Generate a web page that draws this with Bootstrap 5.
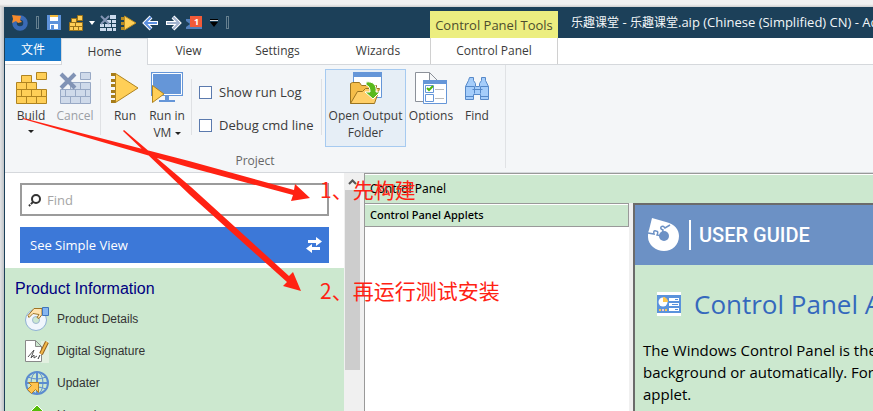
<!DOCTYPE html>
<html lang="en">
<head>
<meta charset="utf-8">
<meta name="viewport" content="width=device-width, initial-scale=1">
<title>乐趣课堂 - 乐趣课堂.aip</title>
<link href="https://cdn.jsdelivr.net/npm/bootstrap@5.3.0/dist/css/bootstrap.min.css" rel="stylesheet">
<style>
:root { --ink:#1c4059; --ribbon:#f4f6f8; --rule:#d5d8dc; --mint:#cce8cf; --ui:"Open Sans","Noto Sans CJK SC",sans-serif; }
body { background:#e9e9eb; font-family:var(--ui); font-size:12px; line-height:16px; color:#3b3b3b; }
button, input { font:inherit; color:inherit; }
.desk-top { height:7px; background:linear-gradient(#f1f1f1 60%,#cfcfcf); }
.desk-side { width:4px; background:linear-gradient(90deg,#e2e3e5,#bfc3c7); }
.app-window { border-left:1px solid var(--ink); background:#fff; min-width:0; }
.title-strip { background:var(--ink); height:31px; color:#f2f6f8; }
.quick-bar { width:425px; padding-left:6px; }
.quick-bar button, .bare { background:none; border:0; padding:0; line-height:0; }
.grip { width:3px; height:13px; border:1px solid #66808f; }
.context-head { width:128px; height:27px; background:#ecee80; color:#4c4d2d; font-size:13px; }
.win-title { padding-left:13px; font-size:13px; }
.win-title span { font-size:12px; }
.tab-strip { height:27px; border-bottom:1px solid var(--rule); }
.tab-strip a { color:#3b3b3b; text-decoration:none; height:26px; font-size:12px; }
.tab-strip .t-file { width:56px; height:23px; background:#1979ca; color:#fff; }
.tab-strip .t-home { width:87px; height:27px; background:var(--ribbon); border:1px solid var(--rule); border-bottom:0; }
.t-view { width:81px; } .t-set { width:97px; } .t-wiz { width:104px; }
.t-ctl { width:128px; border:solid #d0d0d0; border-width:0 1px; }
.ribbon { background:var(--ribbon); height:108px; border-bottom:1px solid var(--rule); }
.ribbon-group { width:501px; padding:4px 4px 0; border-right:1px solid #e0e2e5; margin-bottom:4px; }
.tool { display:flex; flex-direction:column; align-items:center; background:none; border:1px solid transparent; height:78px; padding:2px 0 0; line-height:17px; width:44px; white-space:nowrap; }
.tool > svg { flex-shrink:0; margin-bottom:3px; }
.tool .caret { margin-top:6px; }
.tool span .caret { margin-top:0; }
.tool-off { color:#9b9fa5; }
.tool-run { width:42px; }
.tool-open { width:81px; background:#e6eef6; border-color:#a6caf0; margin-right:1px; }
.tool-opt { width:48px; }
.caret { display:inline-block; border:3px solid transparent; border-top-color:#222; border-bottom:0; vertical-align:middle; }
.split { width:1px; height:56px; background:#dfe1e4; margin:10px 3px 0; }
.checks { width:123px; padding:15px 0 0 4px; gap:17px; font-size:13px; }
.checks input { appearance:none; width:13px; height:13px; border:1px solid #5b7aae; background:#fff; margin:0 7px 0 0; }
.checks input:checked { background:#5b7aae; }
.group-name { color:#666; margin-top:6px; }
.side-pane { width:339px; }
.find-box { margin:10px 15px 11px; height:33px; border:2px solid #9b9b9b; padding-left:6px; }
.find-box input { border:0; outline:0; background:none; font-size:13px; margin-left:3px; min-width:0; }
.find-box input::placeholder { color:#a5a5a5; opacity:1; }
.simple-btn { margin:0 15px 5px; height:36px; background:#3c78d8; color:#fff; border:0; padding:0 7px 0 10px; font-size:13px; }
.info-list { background:var(--mint); font-family:"Liberation Sans",sans-serif; padding:10px 10px 0; }
.info-list h2 { font-size:16px; line-height:22px; color:#000080; margin:0 0 3px; }
.info-list a { height:32px; color:#333; text-decoration:none; gap:8px; padding-left:10px; }
.scroller { width:20px; background:#f0f0f0; padding-left:1px; }
.scroller .thumb { width:15px; height:180px; background:#cdcdcd; }
.scroller button { width:15px; height:17px; }
.main-pane { border:solid #999; border-width:1px 0 0 1px; min-width:0; font-family:"Noto Sans",sans-serif; color:#000; }
.main-head { background:var(--mint); height:29px; border-top:1px solid #fff; padding-left:5px; }
.applets { width:264px; }
.applets h2 { height:24px; font-size:11px; font-weight:500; line-height:16px; border:1px solid #999; border-left:0; background:var(--mint); box-shadow:inset 0 1px #fff; padding-left:5px; margin:0; }
.guide { border:solid #6b6b6b; border-width:2px 0 0 2px; background:var(--mint); margin-left:4px; min-width:0; }
.guide-wrap { background:#f0f0f0; min-width:0; }
.guide-head { background:#6c91c5; height:60px; padding-left:11px; color:#fff; font:500 20px/30px Roboto,sans-serif; }
.guide-head div { border-left:2px solid #fff; margin-left:9px; padding-left:8px; }
.guide h1 { font:26px/36px "Open Sans",sans-serif; color:#3568bd; margin:21px 0 17px 22px; gap:13px; white-space:nowrap; }
.guide p { font:15px/22px "Open Sans",sans-serif; white-space:nowrap; margin:0 0 0 8px; }
.notes { inset:0; pointer-events:none; color:#ff2213; }
.notes span { position:absolute; left:320px; font:21px/26px "Noto Sans CJK SC",sans-serif; white-space:nowrap; }
.note-a { top:176px; } .note-b { top:277px; }
</style>
<script src="https://cdn.jsdelivr.net/npm/bootstrap@5.3.0/dist/js/bootstrap.bundle.min.js"></script>
</head>
<body class="vh-100 overflow-hidden d-flex flex-column position-relative">
<svg width="0" height="0" class="position-absolute" aria-hidden="true">
  <symbol id="bricks" viewBox="0 0 32 32"><path d="M6.500 3.500h10v7h-10zM21.500 .500h10v7h-10zM1.500 10.500h10v7h-10zM11.500 10.500h10v7h-10zM1.500 17.500h5v7h-5zM6.500 17.500h10v7h-10zM16.500 17.500h10v7h-10zM26.500 17.500h5v7h-5zM1.500 24.500h10v7h-10zM11.500 24.500h10v7h-10zM21.500 24.500h10v7h-10z"/></symbol>
  <symbol id="cancel" viewBox="0 0 32 32"><path fill="#cfdaea" stroke="#98a9c5" d="M21.500 .500h10v7h-10zM11.500 10.500h10v7h-10zM21.500 10.500h10v7h-10zM1.500 17.500h5v7h-5zM6.500 17.500h10v7h-10zM16.500 17.500h10v7h-10zM26.500 17.500h5v7h-5zM1.500 24.500h10v7h-10zM11.500 24.500h10v7h-10zM21.500 24.500h10v7h-10z"/><path d="M2 2l14 14M16 2L2 16" stroke="#8193b5" stroke-width="4"/></symbol>
  <symbol id="run" viewBox="0 0 32 32"><path fill="#a67c1a" d="M2 1h5v3H2zM2 7h5v3H2zM2 12h5v3H2zM2 18h5v3H2zM2 23h5v3H2zM2 28h5v3H2z"/><path fill="#ffcf57" stroke="#b08420" d="M6.500 1.500v29L29 16z"/></symbol>
</svg>
<div class="desk-top flex-shrink-0"></div>
<div class="d-flex flex-fill overflow-hidden">
<div class="desk-side flex-shrink-0"></div>
<div class="app-window flex-fill d-flex flex-column">
  <header class="title-strip d-flex flex-shrink-0 align-items-end text-nowrap overflow-hidden">
    <div class="quick-bar d-flex h-100 align-items-center flex-shrink-0">
      <svg width="17" height="17" viewBox="0 0 17 17"><circle cx="9" cy="9" r="5.500" fill="none" stroke="#3a6ab5" stroke-width="4.500"/><path d="M1 1l9 1-1 4 2 2-4 1-2-2-4 2 1-4z" fill="#f58a2c"/></svg>
      <i class="grip ms-2 me-2"></i>
      <button aria-label="Save"><svg width="14" height="15"><path fill="#5e93dc" d="M0 0h14v15H0z"/><path fill="#fff" d="M3 0h8v6H3zM3 9h8v5H3z"/><path fill="#f3b93c" d="M3 0h8v2H3z"/><path fill="#5e93dc" d="M4 10h3v4H4z"/></svg></button>
      <button aria-label="Build" class="ms-2"><svg width="15" height="16" viewBox="0 0 15 16" fill="#ffcf57" stroke="#99721a"><path d="M2.500 3.500h5v4h-5zM8.500 .500h5v5h-5zM.500 7.500h6v4h-6zM6.500 7.500h7v4h-7zM.500 11.500h4v4h-4zM4.500 11.500h5v4h-5zM9.500 11.500h4v4h-4z"/></svg></button>
      <button aria-label="Build menu" class="ms-1"><svg width="8" height="6"><path d="M1 1h6L4 5z" fill="#fff"/></svg></button>
      <button aria-label="Cancel" class="ms-1"><svg width="16" height="16"><path fill="#cbd9ec" d="M10 0h6v4h-6zM7 5h4v3H7zM12 5h4v3h-4zM0 9h4v3H0zM5 9h6v3H5zM12 9h4v3h-4zM0 13h6v3H0zM7 13h5v3H7zM13 13h3v3h-3z"/><path d="M1 1l8 8M9 1L1 9" stroke="#8394b5" stroke-width="2"/></svg></button>
      <button aria-label="Run" class="ms-1"><svg width="18" height="16"><path fill="#b98b22" d="M1 2h3v3H1zM1 7h3v3H1zM1 12h3v3H1z"/><path fill="#ffcf57" stroke="#b98b22" d="M4.500 1v14L16 8z"/></svg></button>
      <button aria-label="Back" class="ms-1"><svg width="18" height="16"><path d="M9 2L3 8l6 6M4 8h12" fill="none" stroke="#fff" stroke-width="4"/><path d="M9 2L3 8l6 6M4 8h11" fill="none" stroke="#5b8fe0" stroke-width="2"/></svg></button>
      <button aria-label="Forward" class="ms-1"><svg width="18" height="16"><path d="M9 2l6 6-6 6M14 8H2" fill="none" stroke="#fff" stroke-width="4"/><path d="M9 2l6 6-6 6M14 8H3" fill="none" stroke="#a3b4cf" stroke-width="2"/></svg></button>
      <button aria-label="Notifications" class="ms-1"><svg width="16" height="16"><path fill="#5380bb" d="M0 4h16v10H0z"/><path fill="#1c4059" d="M0 6l4 3-4 3z"/><path fill="#f25a38" d="M4 1h12v11H4z"/><text x="8" y="10" font-size="9" font-weight="bold" fill="#fff">1</text></svg></button>
      <button aria-label="Customize" class="ms-2"><svg width="8" height="8"><path d="M0 0h8v1H0zM0 3h8L4 8z" fill="#000"/><path d="M0 1h8v1H0z" fill="#ddd"/></svg></button>
      <i class="grip ms-2"></i>
    </div>
    <div class="context-head d-flex align-items-center justify-content-center flex-shrink-0">Control Panel Tools</div>
    <div class="win-title align-self-center"><span>乐趣课堂</span> - <span>乐趣课堂</span>.aip (Chinese (Simplified) CN) - Advanced Installer</div>
  </header>
  <nav class="tab-strip d-flex flex-shrink-0 text-center">
    <a href="#" class="t-file d-flex align-items-center justify-content-center">文件</a>
    <a href="#" class="t-home d-flex align-items-center justify-content-center">Home</a>
    <a href="#" class="t-view d-flex align-items-center justify-content-center">View</a>
    <a href="#" class="t-set d-flex align-items-center justify-content-center">Settings</a>
    <a href="#" class="t-wiz d-flex align-items-center justify-content-center">Wizards</a>
    <a href="#" class="t-ctl d-flex align-items-center justify-content-center">Control Panel</a>
  </nav>
  <section class="ribbon d-flex flex-shrink-0">
    <div class="ribbon-group">
      <div class="d-flex">
        <button class="tool"><svg width="32" height="32" fill="#ffcf57" stroke="#b08420"><use href="#bricks"/></svg>Build<i class="caret"></i></button>
        <button class="tool tool-off"><svg width="32" height="32"><use href="#cancel"/></svg>Cancel</button>
        <i class="split"></i>
        <button class="tool tool-run"><svg width="32" height="32"><use href="#run"/></svg>Run</button>
        <button class="tool tool-run"><svg width="32" height="32"><path fill="#6596d8" d="M0 0h32v24H0zM14 24h4v4h-4zM8 28h16v2H8z"/><path fill="none" stroke="#fff" d="M1.500 1.500h29v21h-29z"/><path fill="#ffcf57" stroke="#b08420" d="M1.500 13.500v17L13 22z"/></svg><span>Run in<br>VM <i class="caret"></i></span></button>
        <i class="split"></i>
        <div class="checks d-flex flex-column">
          <label class="d-flex align-items-center" for="ck-log"><input type="checkbox" id="ck-log">Show run Log</label>
          <label class="d-flex align-items-center" for="ck-dbg"><input type="checkbox" id="ck-dbg">Debug cmd line</label>
        </div>
        <i class="split"></i>
        <button class="tool tool-open"><svg width="32" height="32"><path fill="#fff" stroke="#6596d8" d="M3.500 .500h28v25h-28z"/><path fill="#6596d8" d="M3 0h29v5H3z"/><path fill="#f5bd49" stroke="#9b7420" d="M.500 31.500v-20l2-1h7l2 3h15v7"/><path fill="#ffcf68" stroke="#9b7420" d="M.500 31.500l7-12h5l3-3h14l-5 15z"/><path fill="#59b91b" stroke="#fff" d="M16 10c7-1 11 3 10 10h4l-7 7-8-7h5c0-4-1-6-4-7z"/></svg><span>Open Output<br>Folder</span></button>
        <button class="tool tool-opt"><svg width="32" height="32"><path fill="#fff" stroke="#8c9199" d="M.500 .500h14l8 8v21H.500zM14.500 .500v8h8"/><path fill="#fff" stroke="#6596d8" d="M8.500 8.500h23v23h-23z"/><path fill="#6596d8" d="M8 8h24v4H8z"/><path fill="#fff" stroke="#6596d8" d="M10.500 13.500h8v7h-8zM10.500 22.500h8v7h-8z"/><path stroke="#bbb" d="M20 17.500h9M20 26.500h9"/><path fill="none" stroke="#4db510" stroke-width="2" d="M12 16l2 2 4-4"/></svg>Options</button>
        <button class="tool"><svg width="32" height="32"><path fill="#a5cdfa" stroke="#5689c9" d="M8.500 5.500h4v3l2 3v3h4v-3l2-3v-3h4v3l3 6v13h-8v-5h-7v5h-8v-13l3-6zM4.500 14.500h9v7M19.500 21.500v-7h8M11.500 17.500h10M5 24.500h7M20 24.500h8"/></svg>Find</button>
      </div>
      <div class="group-name text-center">Project</div>
    </div>
  </section>
  <main class="d-flex flex-fill overflow-hidden">
    <aside class="side-pane d-flex flex-column flex-shrink-0">
      <label class="find-box d-flex align-items-center flex-shrink-0"><svg width="14" height="14"><circle cx="8" cy="6" r="4" fill="none" stroke="#333" stroke-width="2"/><path d="M5 9l-4 4" stroke="#333" stroke-width="2" stroke-dasharray="3 1"/></svg><input type="text" placeholder="Find" aria-label="Find"></label>
      <button class="simple-btn d-flex align-items-center justify-content-between flex-shrink-0">See Simple View <svg width="16" height="16" fill="#fff"><path d="M2 3h8V0l6 4.500L10 9V6H2zM14 10H6V7L0 11.500 6 16v-3h8z"/></svg></button>
      <div class="info-list flex-fill">
        <h2>Product Information</h2>
        <a href="#" class="d-flex align-items-center"><svg width="24" height="24"><circle cx="11" cy="13" r="7" fill="none" stroke="#f0f6fc" stroke-width="7"/><circle cx="11" cy="13" r="10.500" fill="none" stroke="#8fb0d4"/><circle cx="11" cy="13" r="3.500" fill="#cce8cf" stroke="#9fb8d4"/><path fill="#ffe3ae" stroke="#9e7424" d="M17 1.500h-8l-6 7 1 2 4-4 6 1-2 3 2 1 3-4z"/><path fill="#86b6f0" stroke="#3f74ba" d="M17.500 .500h6v8h-6z"/></svg>Product Details</a>
        <a href="#" class="d-flex align-items-center"><svg width="24" height="24"><path fill="#e2f0e0" d="M16 2h8v22h-8z"/><path fill="#fff" stroke="#888" d="M.500 1.500h10l6 6v15H.500zM10.500 1.500v6h6"/><path fill="none" stroke="#555" d="M3 18l6-7-3 8 3-3v3l3-2"/><path stroke="#966522" stroke-width="4" d="M22 3l-6 12"/><path stroke="#f4b94b" stroke-width="2" d="M22 3l-6 12"/><path stroke="#333" d="M15 16l-2 4"/></svg>Digital Signature</a>
        <a href="#" class="d-flex align-items-center"><svg width="24" height="24"><g fill="none" stroke="#5b8ccf" stroke-width="2"><circle cx="12" cy="12" r="11"/><ellipse cx="12" cy="12" rx="6" ry="11" stroke-width="1"/><path d="M1 12h22M12 1v22"/><path stroke-width="1" d="M3 6q9 4 18 0M3 18q9-4 18 0"/></g><path fill="#ffc34f" stroke="#b78122" d="M3.500 11.500h10v10l-3-3-4 4-4-4 4-4z"/></svg>Updater</a>
        <a href="#" class="d-flex align-items-center"><svg width="24" height="24"><path fill="#57bd0b" stroke="#fff" d="M12 2l10 10h-5v9H7v-9H2z"/></svg>Upgrades</a>
      </div>
    </aside>
    <div class="scroller flex-shrink-0"><button class="bare d-flex align-items-center justify-content-center" aria-label="Scroll up"><svg width="9" height="6"><path d="M1 5l3.500-3.500L8 5" fill="none" stroke="#555" stroke-width="2"/></svg></button><div class="thumb"></div></div>
    <section class="main-pane d-flex flex-column flex-fill">
      <div class="main-head d-flex align-items-center flex-shrink-0">Control Panel</div>
      <div class="d-flex flex-fill overflow-hidden">
        <div class="applets flex-shrink-0"><h2 class="d-flex align-items-center">Control Panel Applets</h2></div>
        <div class="guide-wrap d-flex flex-fill">
        <article class="guide flex-fill overflow-hidden">
          <div class="guide-head d-flex align-items-center"><svg width="34" height="36" viewBox="0 0 34 36"><path fill="#fff" d="M6 1l14 4C29 7 33 13 33 19c0 9-7 15-15 15S2 28 2 20c0-3 0-5 1-7z"/><circle cx="18" cy="19" r="5" fill="#6c91c5"/><path d="M2 16l6 1q-1-4 2-3 3 0 1 4l5 1 1-6q-3-1-2-3 2-2 4 1l5-3" fill="none" stroke="#6c91c5" stroke-width="1.500"/></svg><div>USER GUIDE</div></div>
          <h1 class="d-flex align-items-center"><svg class="flex-shrink-0" width="24" height="24"><path fill="#fff" d="M0 0h24v24H0z"/><path fill="#5b93dc" d="M0 3h24v18H0z"/><circle cx="6" cy="10" r="4.500" fill="#fff"/><path fill="#ffc64c" d="M6 5a5 5 0 0 1 5 5H6zM2 17h2v2H2zM8 17h2v2H8z"/><path fill="#f7c9c9" d="M5 17h2v2H5z"/><path fill="#fff" d="M12 6h10v3H12zM12 11h10v3H12zM12 16h10v3H12z"/><path stroke="#5b93dc" d="M18 7.500h3M15 12.500h6M18 17.500h3"/></svg>Control Panel Applets</h1>
          <p>The Windows Control Panel is the place where users<br>background or automatically. For example, see this<br>applet.</p>
        </article>
        </div>
      </div>
    </section>
  </main>
</div>
</div>
<div class="notes position-absolute overflow-hidden">
  <svg width="330" height="300" fill="#ff2213"><path d="M23 118l166 43 105 29 1-6 15 14-19 3 2-6-105-28L23 119zM123 131l1-1 67 57 98 89 4-4 8 19-18-5 4-4-97-87z"/></svg>
  <span class="note-a">1、先构建</span><span class="note-b">2、再运行测试安装</span>
</div>
</body>
</html>
